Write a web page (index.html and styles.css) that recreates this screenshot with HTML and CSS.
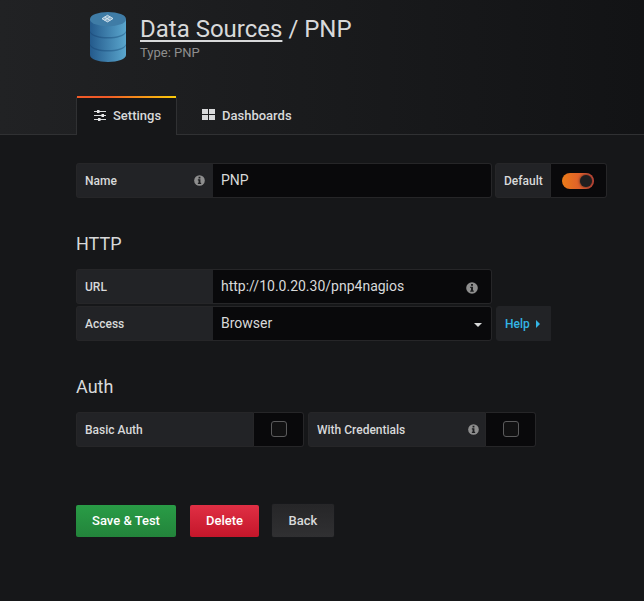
FILE: index.html
```
<!DOCTYPE html>
<html lang="en">
<head>
<meta charset="utf-8">
<title>Data Sources / PNP</title>
<link rel="stylesheet" href="styles.css">
</head>
<body>
<svg class="defs" width="0" height="0">
  <symbol id="info" viewBox="0 0 12 12"><circle cx="6" cy="6" r="5.800" fill="#8e8e8e"/><path d="M5 2h2v1.800H5zM4.200 4.700H7v3.700h.8v1.300H4.200V8.400H5V6h-.8z" fill="#1d1e20"/></symbol>
</svg>
<header class="page-header">
  <div class="brand">
    <svg class="logo" width="36" height="50" viewBox="0 0 36 50">
      <defs><linearGradient id="side"><stop offset="0" stop-color="#245a8c"/><stop offset="1" stop-color="#5aa6cd"/></linearGradient>
      <linearGradient id="ring"><stop offset="0" stop-color="#1d4e7f"/><stop offset="1" stop-color="#3c7fa9"/></linearGradient></defs>
      <path d="M0 7v36c0 4 8 7 18 7s18-3 18-7V7z" fill="url(#side)"/>
      <path d="M0 19c2 4 9 6 18 6s16-2 18-6v1.500c-2 4-9 6-18 6s-16-2-18-6zM0 32c2 4 9 6 18 6s16-2 18-6v1.500c-2 4-9 6-18 6s-16-2-18-6z" fill="url(#ring)"/>
      <ellipse cx="18" cy="7.200" rx="18" ry="7.200" fill="#3f7ca6"/>
      <path d="M12 6.700l5.500-3.400 5.500 3.200-5.500 3.400z" fill="#7fa9c5"/>
      <path d="M12 6.700l5.500-3.400 5.500 3.200-5.500 3.400zM14.500 5.200l5.700 3.200M14.500 8.300l5.700-3.500" fill="none" stroke="#dbe8f1" stroke-width=".9"/>
    </svg>
    <div>
      <h1><a>Data Sources</a> / PNP</h1>
      <div class="type">Type: PNP</div>
    </div>
  </div>
  <nav class="tabs">
    <a class="tab active"><svg width="12" height="11" viewBox="0 0 12 11"><path d="M0 1.500h12M0 5.500h12M0 9.500h12" stroke="#d8d9da" stroke-width="1.200"/><path d="M3 0h2.500v3H3zM7.500 4H10v3H7.500zM4 8h2.500v3H4z" fill="#e8e8e9"/></svg>Settings</a>
    <a class="tab"><svg width="13" height="11" viewBox="0 0 13 11"><path d="M0 0h6v5H0zM7 0h6v5H7zM0 6h6v5H0zM7 6h6v5H7z" fill="#d8d9da"/></svg>Dashboards</a>
  </nav>
</header>
<main>
  <div class="row">
    <div class="label wide">Name<svg class="info" width="11" height="11"><use href="#info"/></svg></div>
    <div class="input">PNP</div>
    <div class="label default">Default</div>
    <div class="toggle"><span class="switch"></span></div>
  </div>
  <h2>HTTP</h2>
  <div class="row">
    <div class="label wide">URL</div>
    <div class="input">http://10.0.20.30/pnp4nagios<svg class="url-info" width="12" height="12"><use href="#info"/></svg></div>
  </div>
  <div class="row second">
    <div class="label wide">Access</div>
    <div class="input">Browser<span class="caret"></span></div>
    <div class="label help">Help<span class="arrow"></span></div>
  </div>
  <h2>Auth</h2>
  <div class="row">
    <div class="label check-label">Basic Auth</div>
    <div class="check"><span></span></div>
    <div class="label check-label gap">With Credentials<svg class="info" width="11" height="11"><use href="#info"/></svg></div>
    <div class="check"><span></span></div>
  </div>
  <div class="buttons">
    <button class="save">Save &amp; Test</button>
    <button class="delete">Delete</button>
    <button class="back">Back</button>
  </div>
</main>
</body>
</html>
```
FILE: styles.css
```
* { box-sizing: border-box; }
body {
  margin: 0;
  height: 601px;
  overflow: hidden;
  background: #161719;
  color: #d8d9da;
  font: 13px/20px Roboto, sans-serif;
}
.defs { display: block; }
svg { flex: none; }
.page-header {
  display: flex;
  flex-direction: column;
  justify-content: space-between;
  height: 135px;
  padding: 12px 0 0 76px;
  border-bottom: 1px solid #303133;
  background: linear-gradient(90deg, #212224, #121315);
}
.brand { display: flex; }
.logo { margin: 0 14px; }
h1 {
  margin: 2px 0 0;
  font-size: 24px;
  font-weight: 400;
  line-height: 30px;
}
h1 a {
  text-decoration: underline;
  text-decoration-thickness: 2px;
  text-underline-offset: 3px;
  text-decoration-skip-ink: none;
}
.type { margin-top: -1px; line-height: 20px; color: #8e8e8e; }
.tabs { display: flex; margin-bottom: -1px; }
.tab {
  display: flex;
  align-items: center;
  height: 39px;
  padding: 0 25px;
  font-weight: 500;
}
.tab svg { margin: 0 7px 2px 0; }
.tab.active {
  position: relative;
  width: 101px;
  padding: 0 0 0 17px;
  border: 1px solid #303133;
  border-bottom: 0;
  border-radius: 3px 3px 0 0;
  background: #161719;
}
.tab.active::before {
  content: "";
  position: absolute;
  top: -1px;
  left: 0;
  right: 0;
  height: 2px;
  background: linear-gradient(90deg, #f05a28 30%, #fbca0a 99%);
}
main { padding: 28px 0 0 76px; }
.row { display: flex; height: 35px; }
.second { margin-top: 2px; }
.label {
  display: flex;
  align-items: center;
  height: 35px;
  padding: 0 8px;
  border: 1px solid #262628;
  border-radius: 3px 0 0 3px;
  background: #222326;
  font-size: 12px;
  font-weight: 500;
}
.wide { width: 137px; border-right: 0; }
.info { margin-left: auto; }
.input {
  display: flex;
  align-items: center;
  width: 279px;
  padding: 0 8px 2px;
  border: 1px solid #262628;
  border-left: 0;
  border-radius: 0 3px 3px 0;
  background: #09090b;
  font-size: 14px;
}
.url-info { margin: 5px 5px 0 auto; }
.caret {
  margin: 4px 1px 0 auto;
  border: 4px solid transparent;
  border-top-color: #d8d9da;
  border-bottom: 0;
}
.default { width: 56px; margin-left: 3px; }
.toggle, .check {
  display: flex;
  align-items: center;
  justify-content: center;
  width: 56px;
  border: 1px solid #262628;
  border-left: 0;
  border-radius: 0 3px 3px 0;
  background: #09090b;
}
.switch {
  display: flex;
  align-items: center;
  justify-content: flex-end;
  width: 32px;
  height: 16px;
  margin-right: 1px;
  padding-right: 2px;
  border-radius: 8px;
  background: linear-gradient(90deg, #eb7b18, #d44a3a);
}
.switch::after {
  content: "";
  width: 12px;
  height: 12px;
  border-radius: 50%;
  background: #1f1f20;
  box-shadow: 0 0 3px #1f1f20;
}
.help { width: 55px; margin-left: 4px; border-color: #222326; color: #33b5e5; }
.arrow {
  margin-left: 6px;
  border: 4px solid transparent;
  border-left-color: #33b5e5;
  border-right: 0;
}
h2 { margin: 34px 0 13px; font-size: 18px; font-weight: 400; line-height: 24px; }
.check-label { width: 178px; }
.check-label .info { margin-right: -2px; }
.gap { margin-left: 4px; }
.check { width: 50px; }
.check span {
  width: 16px;
  height: 16px;
  margin-bottom: 2px;
  border: 1px solid #5b5b5c;
  border-radius: 3px;
  background: #111112;
}
.buttons { display: flex; align-items: flex-end; height: 33px; margin-top: 57px; }
button {
  height: 32px;
  padding: 0 0 1px;
  border: 0;
  border-radius: 2px;
  color: #fff;
  font: 500 13px Roboto, sans-serif;
}
.save { width: 100px; margin-right: 14px; background: linear-gradient(#299c46, #23843b); }
.delete { width: 69px; margin-right: 13px; background: linear-gradient(#e02f44, #c4162a); }
.back {
  width: 62px;
  height: 33px;
  padding-bottom: 0;
  color: #d8d9da;
  background: linear-gradient(#262628, #303032);
  box-shadow: 0 0 1px #303133;
}
```
